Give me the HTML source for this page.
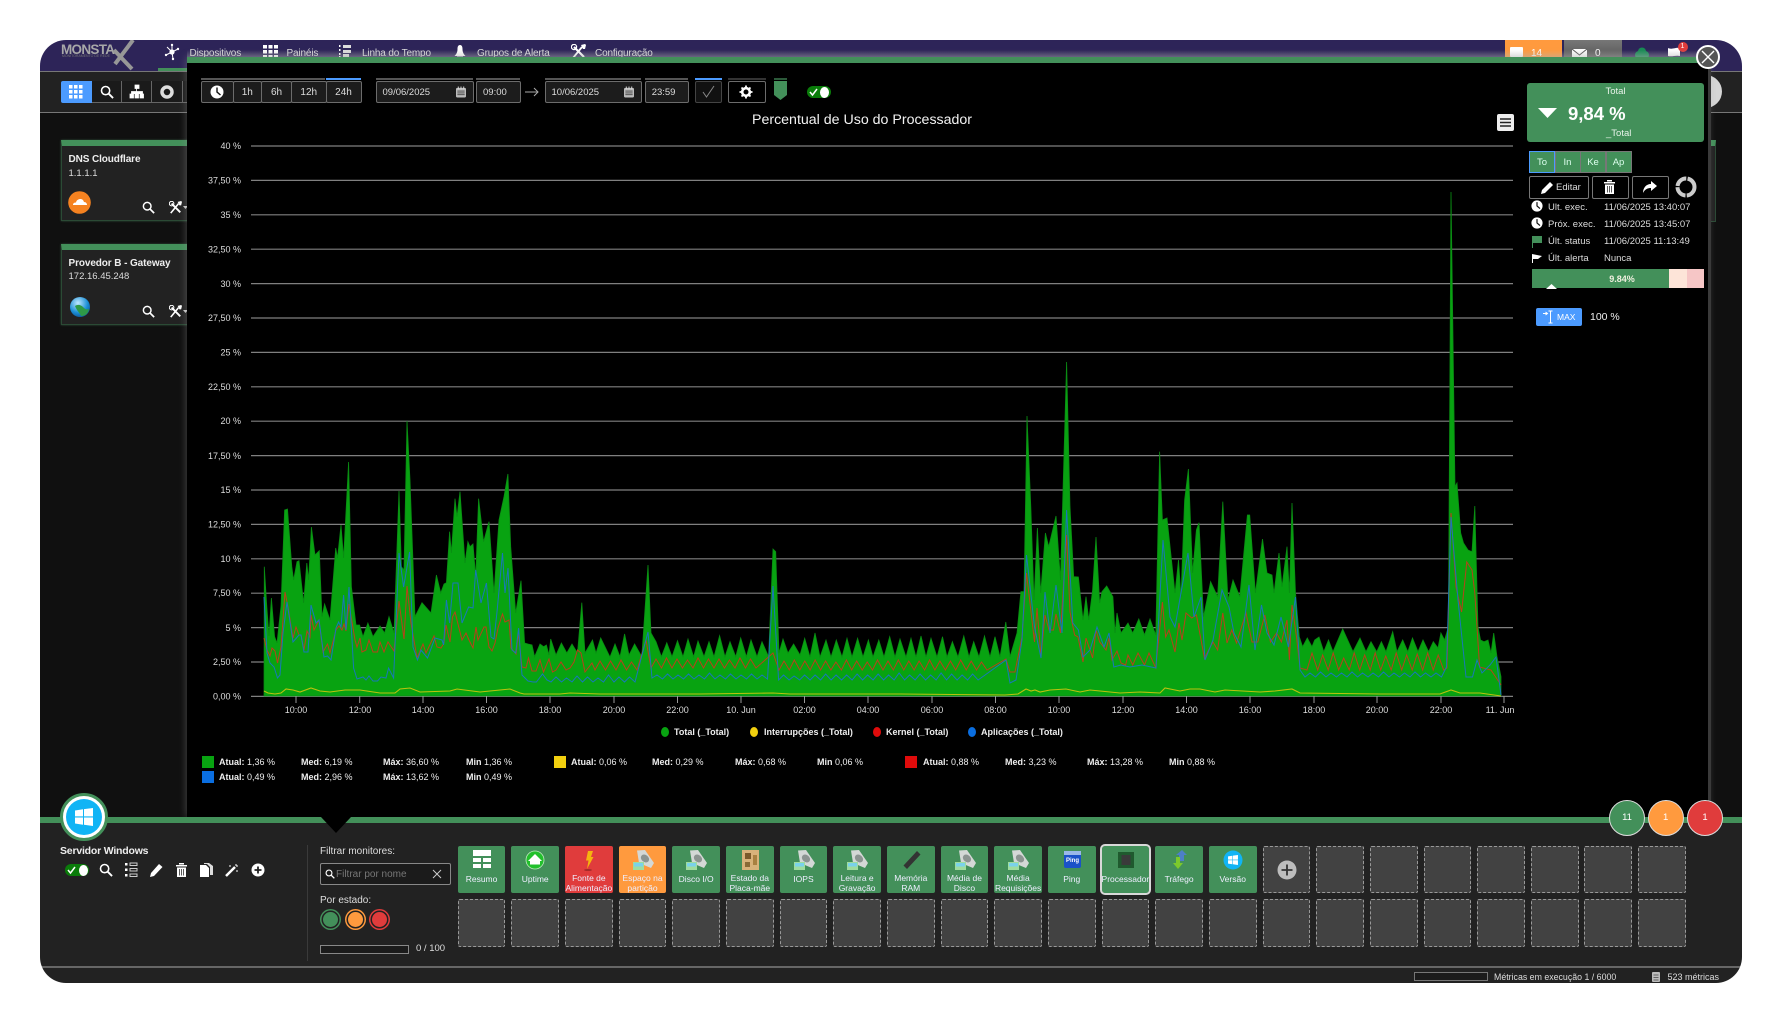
<!DOCTYPE html>
<html lang="pt"><head><meta charset="utf-8"><title>Monstax</title>
<style>
html,body{margin:0;padding:0;background:#fff;width:1782px;height:1023px;overflow:hidden}
body{font-family:"Liberation Sans",sans-serif;color:#eee;font-size:10px}
#w{position:absolute;left:0;top:0;width:1782px;height:1023px;clip-path:inset(40px 40px 40px 40px round 26px);background:#101010;overflow:hidden;filter:blur(.35px)}
.a{position:absolute;white-space:nowrap;line-height:12px}
.b{position:absolute}
svg.b{overflow:visible}
.nav{font-size:10px;letter-spacing:-.15px;color:#ddd;top:48px}
.st{font-size:9px;color:#eee}.st b{font-weight:bold}
.tb{position:absolute;top:81px;height:20px;border:1px solid #6c6c6c;background:#1c1c1c;border-radius:2px;color:#ddd;font-size:10px;line-height:22px;text-align:center;box-sizing:content-box}
.tl{position:absolute;top:78px;height:2px;background:#555}
.lbl{font-size:9px;font-weight:normal;fill:#ddd;font-family:"Liberation Sans",sans-serif}
.leg{font-size:9px;font-weight:bold;color:#eee;top:726px}
.dot{position:absolute;top:727px;width:8px;height:10px;border-radius:50%}
#tiles{position:absolute;left:457.7px;top:845.7px;display:grid;grid-template-columns:repeat(23,47.7px);grid-auto-rows:47.7px;column-gap:5.97px;row-gap:6px}
#tiles div{position:relative;background:#43905a;border-radius:2px;color:#eef;font-size:8.5px;line-height:10px;text-align:center;overflow:visible}
#tiles div span{position:absolute;left:-3px;right:-3px;top:28px}
#tiles div.two span{top:27px}
#tiles div svg{position:absolute;left:12px;top:3px}
#tiles i{display:block;background:#424242;border:1px dashed #999;border-radius:2px;box-sizing:border-box}
.row{font-size:9.5px;color:#ddd}
.rtab{position:absolute;top:151px;height:20px;width:24px;border:1px solid #777;background:#43905a;color:#dfe;text-align:center;line-height:22px;font-size:9.5px;box-sizing:content-box}
.rb{position:absolute;top:176px;height:21px;border:1px solid #777;border-radius:2px;background:#000;box-sizing:content-box}
.cb{position:absolute;top:800px;width:34px;height:34px;border-radius:50%;border:1px solid #ddd;color:#fff;text-align:center;line-height:34px;font-size:9.5px}
.sc{position:absolute;top:912px;width:15px;height:15px;border-radius:50%}
</style></head><body>
<svg width="0" height="0" style="position:absolute">
<defs>
<symbol id="sr" viewBox="0 0 15 15"><circle cx="6" cy="6" r="4.4" fill="none" stroke="#fff" stroke-width="1.7"/><path d="M9.3 9.3L14 14" stroke="#fff" stroke-width="2"/></symbol>
<symbol id="tl" viewBox="0 0 15 15"><path d="M2 14L11 3" stroke="#fff" stroke-width="1.800"/><path d="M3 3l10 10" stroke="#fff" stroke-width="2.200"/><circle cx="3" cy="3" r="2.600" fill="none" stroke="#fff" stroke-width="1.200"/><path d="M10 1l4-1 1 1-1 4-2 0z" fill="#fff"/></symbol>
<symbol id="ck" viewBox="0 0 14 14"><circle cx="7" cy="7" r="6.500" fill="#fff"/><path d="M7 2.500V7l3.500 3" stroke="#111" stroke-width="1.400" fill="none"/></symbol>
<symbol id="dk" viewBox="0 0 24 24"><path d="M6 1.500L14 1l9 13-3 5-12-5z" fill="#d4d8d6"/><ellipse cx="14" cy="9.500" rx="4.500" ry="3.500" transform="rotate(40 14 9.500)" fill="#8c9491"/><rect x="2" y="13" width="11" height="8" fill="#9fdc9f"/><rect x="3" y="14" width="9" height="3.500" fill="#7ad2ea"/></symbol>
<symbol id="win" viewBox="0 0 20 20"><path d="M1 3.500l8-1.200V9.400H1zM10 2.100L19 1v8.400h-9zM1 10.500h8v7.200l-8-1.200zM10 10.500h9V19l-9-1.200z" fill="#fff"/></symbol>
<symbol id="cal" viewBox="0 0 11 12"><rect y="1.500" width="11" height="10.500" rx="1.500" fill="#bbb"/><path d="M2.500 0v3M5.500 0v3M8.500 0v3" stroke="#ddd" stroke-width="1"/><path d="M1.500 5h8M1.500 7h8M1.500 9h8" stroke="#444" stroke-width="1"/></symbol>
</defs></svg>
<div id="w">
<!-- top bar -->
<div class="b" style="left:40px;top:40px;width:1702px;height:31px;background:#2d2458"></div>
<div class="b" style="left:40px;top:71px;width:1702px;height:42px;background:#222;border-top:1.5px solid #777;border-bottom:1.5px solid #777;box-sizing:border-box"></div>
<div class="a" style="left:61px;top:44px;font-size:13.500px;font-weight:bold;color:#a8a8a8;letter-spacing:-.7px">MONSTA</div>
<div class="a" style="left:62px;top:53px;font-size:3.500px;line-height:6px;color:#777">MONITORAMENTO DE REDE</div>
<svg class="b" style="left:112px;top:40px" width="22" height="30" viewBox="0 0 22 30"><path d="M2 10l18 19M21 0L3 24" stroke="#979797" stroke-width="4" fill="none"/></svg>
<svg class="b" style="left:164px;top:44px" width="16" height="16" viewBox="0 0 16 16"><circle cx="8" cy="8" r="2.600" fill="#fff"/><path d="M8 8L3 3M8 8l6-3M8 8l-6 3M8 8l1 7M8 8l0-7" stroke="#fff" stroke-width="1"/><circle cx="2" cy="11" r="1.200" fill="#fff"/><circle cx="14" cy="5" r="1.200" fill="#fff"/><circle cx="9" cy="15" r="1.200" fill="#fff"/><circle cx="8" cy="1" r="1.200" fill="#fff"/></svg>
<div class="a nav" style="left:189.500px">Dispositivos</div>
<svg class="b" style="left:263px;top:45px" width="15" height="14" viewBox="0 0 15 14"><path d="M0 0h4v3.500H0zM5.500 0h4v3.500h-4zM11 0h4v3.500h-4zM0 5h4v3.500H0zM5.500 5h4v3.500h-4zM11 5h4v3.500h-4zM0 10h4v3.500H0zM5.500 10h4v3.500h-4zM11 10h4v3.500h-4z" fill="#fff"/></svg>
<div class="a nav" style="left:286.500px">Painéis</div>
<svg class="b" style="left:339px;top:45px" width="12" height="13" viewBox="0 0 12 13"><path d="M0 0h1.500v2H0zM0 4h1.500v2H0zM0 8h1.500v2H0zM0 11h1.500v2H0z" fill="#fff"/><path d="M4 0h8v3H4zM4 5h8v3H4zM4 9h6v3H4z" fill="#ddd"/></svg>
<div class="a nav" style="left:362px">Linha do Tempo</div>
<svg class="b" style="left:454px;top:45px" width="12" height="13" viewBox="0 0 12 13"><path d="M6 0c2 0 2.500 2 2.500 4 0 3 1 5 3 7H.5c2-2 3-4 3-7C3.500 2 4 0 6 0z" fill="#fff"/><rect x="3" y="11.500" width="6" height="1.500" fill="#fff"/></svg>
<div class="a nav" style="left:477px">Grupos de Alerta</div>
<svg class="b" style="left:571px;top:44px" width="15" height="15"><use href="#tl"/></svg>
<div class="a nav" style="left:595px">Configuração</div>
<div class="b" style="left:158px;top:68px;width:30px;height:3px;background:#43905a"></div>
<!-- toolbar behind -->
<div class="b" style="left:60.700px;top:81px;width:31px;height:22px;background:#4c9bff;border-radius:2px 0 0 2px"></div>
<svg class="b" style="left:69px;top:85px" width="14" height="14" viewBox="0 0 14 14"><path d="M0 0h3.500v3.500H0zM5 0h3.500v3.500H5zM10 0h3.500v3.500H10zM0 5h3.500v3.500H0zM5 5h3.500v3.500H5zM10 5h3.500v3.500H10zM0 10h3.500v3.500H0zM5 10h3.500v3.500H5zM10 10h3.500v3.500H10z" fill="#fff"/></svg>
<div class="b" style="left:92px;top:81px;width:29px;height:21px;background:#1a1a1a;border-right:1px solid #666;border-bottom:1px solid #666"></div>
<div class="b" style="left:122px;top:81px;width:29px;height:21px;background:#1a1a1a;border-right:1px solid #666;border-bottom:1px solid #666"></div>
<div class="b" style="left:152px;top:81px;width:30px;height:21px;background:#1a1a1a;border-right:1px solid #666;border-bottom:1px solid #666"></div>
<div class="b" style="left:183px;top:81px;width:6px;height:21px;background:#1a1a1a;border-bottom:1px solid #666"></div>
<svg class="b" style="left:100px;top:85px" width="14" height="14"><use href="#sr"/></svg>
<svg class="b" style="left:130px;top:85px" width="14" height="14" viewBox="0 0 14 14"><path d="M5 0h4v3.500H5zM0 9h3.500v4H0zM5 9h3.500v4H5zM10 9h3.500v4H10zM6.500 3.500v3M1.500 9V6.500h11V9" fill="#fff" stroke="#fff" stroke-width=".8"/></svg>
<svg class="b" style="left:160px;top:85px" width="14" height="14" viewBox="0 0 14 14"><circle cx="7" cy="7" r="5" fill="none" stroke="#ddd" stroke-width="3.500"/></svg>
<!-- left cards -->
<div class="b" style="left:60.700px;top:139.500px;width:140px;height:81px;background:#222;border:1px solid #2b4a35;border-top:6px solid #43905a;box-sizing:border-box;box-shadow:0 0 2px #33533d"></div>
<div class="b" style="left:60.700px;top:244px;width:140px;height:81px;background:#222;border:1px solid #2b4a35;border-top:6px solid #43905a;box-sizing:border-box;box-shadow:0 0 2px #33533d"></div>
<div class="a" style="left:68.500px;top:153.500px;font-size:10px;font-weight:bold;color:#eee;letter-spacing:-.1px">DNS Cloudflare</div>
<div class="a" style="left:68.500px;top:168px;font-size:9.500px;color:#ddd">1.1.1.1</div>
<svg class="b" style="left:68px;top:191px" width="23" height="23" viewBox="0 0 23 23"><circle cx="11.500" cy="11.500" r="11.300" fill="#f58220"/><path d="M5 14c0-2 1.500-2.500 3-2.500C8.500 9 10.500 8 12.500 8c2 0 3 1.500 3.500 3 2 0 3 1.500 3 3z" fill="#fff"/></svg>
<svg class="b" style="left:142px;top:201px" width="13" height="13"><use href="#sr"/></svg>
<svg class="b" style="left:169px;top:201px" width="13" height="13"><use href="#tl"/></svg>
<svg class="b" style="left:183px;top:206px" width="5" height="3"><path d="M0 0h5L2.500 3z" fill="#ccc"/></svg>
<div class="a" style="left:68.500px;top:257.500px;font-size:10px;font-weight:bold;color:#eee;letter-spacing:-.1px">Provedor B - Gateway</div>
<div class="a" style="left:68.500px;top:271px;font-size:9.500px;color:#ddd">172.16.45.248</div>
<svg class="b" style="left:70px;top:297px" width="20" height="20" viewBox="0 0 20 20"><defs><radialGradient id="gl" cx=".4" cy=".3" r=".8"><stop offset="0" stop-color="#bfe8ff"/><stop offset=".6" stop-color="#1b8fd6"/><stop offset="1" stop-color="#0a4a8c"/></radialGradient></defs><circle cx="10" cy="10" r="10" fill="url(#gl)"/><path d="M5 9c3-2 6-1 8 1s3 3 6 2c-1 5-4 7-8 7-1-3-4-5-6-10z" fill="#2e9a47"/></svg>
<svg class="b" style="left:142px;top:305px" width="13" height="13"><use href="#sr"/></svg>
<svg class="b" style="left:169px;top:305px" width="13" height="13"><use href="#tl"/></svg>
<svg class="b" style="left:183px;top:310px" width="5" height="3"><path d="M0 0h5L2.500 3z" fill="#ccc"/></svg>
<!-- top right tabs -->
<div class="b" style="left:1505px;top:40px;width:57px;height:20px;background:#ff9a3e"></div>
<div class="b" style="left:1510px;top:47px;width:13px;height:10px;background:#fff;border-radius:1px"></div>
<div class="a" style="left:1531px;top:48px;color:#fff;font-size:10px">14</div>
<div class="b" style="left:1563.500px;top:40px;width:58.500px;height:20px;background:linear-gradient(#777,#555)"></div>
<svg class="b" style="left:1572px;top:49px" width="15" height="11" viewBox="0 0 15 11"><path d="M0 0h15v11H0z" fill="#fff"/><path d="M0 0l7.500 6L15 0" stroke="#555" fill="none"/></svg>
<div class="a" style="left:1595px;top:48px;color:#fff;font-size:10px">0</div>
<svg class="b" style="left:1634px;top:48px" width="16" height="11" viewBox="0 0 16 11"><circle cx="5" cy="7" r="4" fill="#188a55"/><circle cx="11" cy="7" r="4" fill="#188a55"/><circle cx="8" cy="3.500" r="4" fill="#188a55"/></svg>
<svg class="b" style="left:1668px;top:47px" width="12" height="11" viewBox="0 0 12 11"><path d="M0 1c4 2 8-1 12 0v8c-4-1-8 1-12 0z" fill="#fff"/></svg>
<div class="a" style="left:1677.500px;top:42px;width:10px;height:10px;border-radius:50%;background:#e03c3c;color:#fff;font-size:7px;line-height:10px;text-align:center">1</div>
<div class="b" style="left:1689px;top:75px;width:33px;height:33px;border-radius:50%;background:#d6d6d6"></div>
<div class="b" style="left:187px;top:50px;width:1521px;height:8px;background:linear-gradient(rgba(255,255,255,0),rgba(200,200,200,.35))"></div>
<!-- right col -->
<div class="b" style="left:1708px;top:140px;width:8px;height:82px;background:#222;border:1px solid #2b4a35;border-top:6px solid #43905a;box-sizing:border-box"></div>
<!-- modal -->
<div class="b" style="left:187px;top:57px;width:1521px;height:760px;background:#000;border-top:6px solid #43905a;box-sizing:border-box;box-shadow:0 0 8px rgba(150,150,150,.45)"></div>
<div class="b" style="left:1708px;top:63px;width:3px;height:754px;background:#3a3a3a"></div>
<!-- modal toolbar -->
<div class="tl" style="left:201px;width:124px"></div><div class="tl" style="left:325.500px;width:35px;background:#4c9bff"></div>
<div class="tb" style="left:201px;width:30.500px"></div>
<svg class="b" style="left:210px;top:85px" width="14" height="14"><use href="#ck"/></svg>
<div class="tb" style="left:232.500px;width:27.500px">1h</div>
<div class="tb" style="left:261px;width:29px">6h</div>
<div class="tb" style="left:291px;width:33.500px">12h</div>
<div class="tb" style="left:325.500px;width:34px">24h</div>
<div class="tl" style="left:376px;width:97px"></div>
<div class="tb" style="left:376px;width:95.500px;text-align:left;text-indent:5.500px;font-size:9.500px">09/06/2025</div>
<svg class="b" style="left:456px;top:86px" width="10" height="12"><use href="#cal"/></svg>
<div class="tl" style="left:476px;width:44px"></div>
<div class="tb" style="left:476px;width:43px;text-align:left;text-indent:6px;font-size:9.500px">09:00</div>
<svg class="b" style="left:525px;top:87px" width="14" height="10" viewBox="0 0 14 10"><path d="M0 5h13M9 1l4 4-4 4" fill="none" stroke="#aaa" stroke-width="1"/></svg>
<div class="tl" style="left:545px;width:96px"></div>
<div class="tb" style="left:545px;width:94.500px;text-align:left;text-indent:5.500px;font-size:9.500px">10/06/2025</div>
<svg class="b" style="left:624px;top:86px" width="10" height="12"><use href="#cal"/></svg>
<div class="tl" style="left:644.700px;width:43.500px"></div>
<div class="tb" style="left:644.700px;width:42px;text-align:left;text-indent:6px;font-size:9.500px">23:59</div>
<div class="tl" style="left:695px;width:27px;background:#4c9bff"></div>
<div class="tb" style="left:695px;width:25px;background:#111;border-color:#444"></div>
<svg class="b" style="left:702px;top:85px" width="13" height="13" viewBox="0 0 13 13"><path d="M1 7l3.500 5L12 1" fill="none" stroke="#888" stroke-width="1"/></svg>
<div class="tl" style="left:728px;width:38px;background:#333"></div>
<div class="tb" style="left:728px;width:36px;background:#000"></div>
<svg class="b" style="left:739px;top:85px" width="14" height="14" viewBox="0 0 14 14"><circle cx="7" cy="7" r="3.800" fill="none" stroke="#fff" stroke-width="2.600"/><path d="M7 .5v2.500M7 11v2.500M.5 7H3M11 7h2.500M2.500 2.500l2 2M9.500 9.500l2 2M11.500 2.500l-2 2M4.500 9.500l-2 2" stroke="#fff" stroke-width="1.800"/></svg>
<div class="b" style="left:774px;top:78px;width:13px;height:2px;background:#2c5a3a"></div>
<svg class="b" style="left:774px;top:81px" width="13" height="19" viewBox="0 0 13 19"><path d="M0 0h13v14l-6.500 5L0 14z" fill="#43905a"/></svg>
<div class="b" style="left:806.500px;top:86px;width:24px;height:12px;border-radius:6px;background:#0a7c0a"></div>
<div class="b" style="left:820px;top:86.500px;width:9px;height:11px;border-radius:50%;background:#fff"></div>
<svg class="b" style="left:809px;top:88px" width="9" height="8" viewBox="0 0 9 8"><path d="M1 4l2.500 3L8 1" stroke="#fff" stroke-width="1.500" fill="none"/></svg>
<div class="a" style="left:752px;top:113px;font-size:14.200px;color:#f2f2f2;line-height:15px">Percentual de Uso do Processador</div>
<div class="b" style="left:1497px;top:114px;width:17px;height:17px;background:#eee;border-radius:2px"></div>
<svg class="b" style="left:1497px;top:114px" width="17" height="17"><path d="M3 5h11M3 8.500h11M3 12h11" stroke="#222" stroke-width="1.600"/></svg>
<!-- chart -->
<svg class="b" style="left:0;top:0" width="1782" height="1023" viewBox="0 0 1782 1023">
<g stroke="#808080" stroke-width="1.200">
<path d="M251 146H1513M251 180.400H1513M251 214.800H1513M251 249.200H1513M251 283.600H1513M251 318H1513M251 352.400H1513M251 386.800H1513M251 421.200H1513M251 455.600H1513M251 490H1513M251 524.400H1513M251 558.800H1513M251 593.200H1513M251 627.600H1513M251 662H1513M251 696.400H1513"/>
</g>
<g class="lbl" text-anchor="end">
<text class="lbl" x="241" y="149">40 %</text><text class="lbl" x="241" y="183.500">37,50 %</text><text class="lbl" x="241" y="218">35 %</text><text class="lbl" x="241" y="252.500">32,50 %</text><text class="lbl" x="241" y="287">30 %</text><text class="lbl" x="241" y="321">27,50 %</text><text class="lbl" x="241" y="355.500">25 %</text><text class="lbl" x="241" y="390">22,50 %</text><text class="lbl" x="241" y="424">20 %</text><text class="lbl" x="241" y="459">17,50 %</text><text class="lbl" x="241" y="493">15 %</text><text class="lbl" x="241" y="527.500">12,50 %</text><text class="lbl" x="241" y="562">10 %</text><text class="lbl" x="241" y="596">7,50 %</text><text class="lbl" x="241" y="631">5 %</text><text class="lbl" x="241" y="665">2,50 %</text><text class="lbl" x="241" y="699.500">0,00 %</text>
</g>
<path fill="#08a311" stroke="#0a8d13" stroke-width=".8" d="M264 696 264.300 566.700 266.800 606.700 269 636 271.400 598 274.600 636.700 277 643 281 606 284.600 510 287.500 509 291.800 566.700 293.600 580 297 561.700 299 560.700 303.600 603 306.800 563 308.600 580 311.400 527 315 555 319.300 550.700 322 616.700 324.600 604 330 620 335.700 548 337.500 558 341 525 343.600 558 348.600 462 351.400 586.700 356 625 359.600 625 363 636.700 367.900 623 373 636.700 380 626 384.600 633 389 616.700 394 633 399 491 401.400 566.700 404 570 407 421 410 480 415 616.700 422 602.700 431 613 436.400 575 440.700 593 444 584 446.400 582.700 449.600 531.700 451.400 553 455 498.700 457 516.700 460 491.700 465 563 467.900 541.700 470 546.700 473 544 475.700 576.700 478.600 498.700 483.600 541.700 489 521.700 494 593 499 520 504 496.700 507.900 474 510.700 546.700 515.700 613 521 580.700 524.600 643 528 644 532 645 534.600 656.700 540 644 543.600 646.700 546.400 645 549 655 550.700 639 556 655 561.400 643 566.800 653 572 644 577.500 653 581.800 602.700 585 653 592.500 640 596 653 600.700 638 610 657 615 644 620 656.700 624.600 634 629 655 634.600 644 641.800 656.700 648 565 651 633 656 641.700 661.400 656.700 666.800 642.700 672 656.700 677.500 640.700 683 656.700 688 639 693.600 656.700 698 641 704 656.700 709 641.700 714 656.700 719.600 635.700 725 656.700 730 641.700 735.700 656.700 740.700 638 746.400 656.700 751 640 757 656.700 762 641.700 768.600 656.700 773 549 775.700 551.700 779 653 783 639 788 653 793.600 644 800 655 804.700 638.300 810 657 815 633 820 657 826 640 831 657 836.300 640 842 657 847 638.300 852 657 857.600 638.300 863 657 868.400 640 873 657 878.800 640 884 657 889.700 636.700 895 657 900 639 906 657 911 638.300 916 657 921 636 926 657 931 638.300 937 657 942.500 636.700 947 657 952.400 641.700 958 657 963.800 636 969 657 973.700 641.700 979 657 984.500 636 990 657 995 636.700 1000 657 1005.800 622 1010 656.700 1017 633 1020.900 591.700 1024 591.700 1027 416 1030.800 506.700 1034 600 1037.400 528 1040.700 593 1045.400 533 1048.700 546.700 1056 516 1060.500 580 1066.600 362 1070 506.700 1073.700 576.700 1078.400 577 1083 620 1086 596.700 1088.800 620 1092.600 590 1096 537 1099.700 603 1102 591.700 1106.700 586 1112.900 596.700 1115 633 1117 613 1121 633 1128 623 1132.700 633 1138.800 619 1144.500 635 1150 619 1155.800 635 1159.600 451.700 1162.400 520 1167 518 1175 593 1178.500 560 1181 596.700 1184.600 500 1188.400 469 1192.600 573 1196.400 530 1199 522.700 1203.500 616.700 1210.600 581.700 1217.600 596.700 1222.800 501.700 1228 600 1233 580 1239.800 596.700 1247.400 515 1249.700 515 1255.400 593 1262.500 539 1267 573 1272 575 1274 593 1279 553 1282 586.700 1287 546.700 1289.400 593 1292 503 1295.500 593 1299.300 636.700 1302.600 646.700 1307.300 638 1312 646.700 1314.700 640 1319 637 1323.800 651.700 1328.500 640 1333 651.700 1342.700 629 1353 651.700 1360 638 1366 651.700 1371 641.700 1376.700 651.700 1381.400 641.700 1386 651.700 1392.700 631.700 1397 651.700 1402.700 640 1407.800 651.700 1412.500 638 1418 651.700 1423 640 1428.600 651.700 1433.300 641.700 1438 648 1440.900 633 1444.600 640 1448.400 626.700 1451 192 1455 486.700 1457 483 1460.700 533 1463.500 543 1468 550 1472 551.700 1474.800 506 1478 626.700 1480.500 640 1484 641.700 1488 640 1491 653 1493.700 633 1497 656.700 1501 676.700 1501 696Z"/>
<path fill="none" stroke="#b8411a" stroke-width="1" d="M264 638 267 650 270 656 272 648 275 651 277.500 663 281 647 285 592 288 607 293 638 296 627 299 635 301 635 304 650 307 631 310 637 311 615 314 630 319 620 323 652 327.500 644 330 653 336 630 339 626 342 630 344 624 346 631 349 604 355 640 357 647 360 638 362 652 366 650 369 640 373 652 377.500 652 380 642 384 652 388 642 394 651 399 601 404 639 407 586 411 623 417 658 423 644 426 653 434 636 437 647 441 648 444 643 446 625 450 642 452.500 617 455 612 462 640 466 633 469 640 473 648 476 627 478 640 484 627 486 627 489 647 492 651 495 643 498 628 502.500 614 505 622 509 620 511 648 516 654 518.500 633 522 667 526 668 528.500 658 532 671 536 671 540 660 543.500 672 549 659 552.500 672 556 670 561 662 566 670 570 668 574 662 577.500 650 581 653 585 672 592 663 595 670 l5 -9 5.500 9 5 -9 5.500 9 5 -10 5.500 10 5 -8 5.500 8 L646 640 651 668 l5 -9 5.500 9 5 -10 5.500 10 5 -9 5.500 9 5 -8 5.500 8 5 -10 5.500 10 5 -9 5.500 9 5 -9 5.500 9 5 -8 5.500 8 5 -10 5.500 10 5 -9 5.500 9 L773 653 779 670 l5 -9 5.300 9 5 -10 5.500 10 5 -9 5.300 9 5 -10 5.500 10 5 -9 5.300 9 5 -8 5.500 8 5 -10 5.300 10 5 -9 5.500 9 5 -8 5.300 8 5 -10 5.500 10 5 -9 5.300 9 5 -10 5.500 10 5 -9 5.300 9 5 -9 5.500 9 5 -10 5.300 10 5 -9 5.500 9 5 -9 5.300 9 5 -10 5.500 10 5 -9 5.300 9 5 -8 5.500 8 L1006 659 1010 672 1015 672 1022 637 1026.500 573 1034.500 642 1037 608 1041 657 1045 615 1049 630 1053.500 630 1056 614 1060.500 633 1066.600 535 1070 612 1074.600 635 1078 637 1083 662 1086 638 1092.600 658 1096 630 1099.700 642 1106 650 1109 638 1112 660 1117 651 1121 663 1125.600 665 1128 655 1132.700 665 1138 653 1144.500 665 1149 653 1155.800 668 1162.400 602 1165.700 637 1169 630 1175 652 1179 623 1182 640 1186 613 1191.700 618 1196.400 615 1204.400 658 1213 642 1217.600 650 1222.800 613 1227 643 1231.800 630 1236.500 643 1246 613 1252 642 1257.800 642 1264.800 615 1270.500 642 1276.600 633 1281.400 642 1287 620 1289.400 660 1292 605 1296.500 637 1300 668 1307 670 l5 -17 5.700 17 5 -15 5.500 15 5 -17 5.500 17 5 -12 5.500 12 5 -17 5.500 17 5 -15 5.500 15 5 -17 5.500 17 5 -14 5.500 14 5 -17 5.500 17 5 -15 5.500 15 5 -16 5.500 16 5 -17 5.500 17 5 -15 5.500 15 L1447 668 1451 513 1456 587 1461.600 612 1466.800 562 1472 570 1474.800 593 1479.600 667 1491 670 1501 685"/>
<path fill="none" stroke="#1878b8" stroke-width="1" d="M264 597 267 653 270 663 274 667 277.500 678 280 675 283 633 287 602 293 642 299 635 301 635 304 652 308 652 311 605 316 623 319 620 324 657 327.500 656 331 660 336 628 338.600 622 341 627 343.600 595 346 630 349 587 353.600 668 357 679 363 677 366 680 369 676 373 681 377.500 681 381 677 386 678 388.600 668 393.600 678 399 553 403.600 587 409.600 552 413 647 417.500 660 421 650 427.500 658 435 638 442 640 443.600 645 446.400 600 449.600 623 453 583 458 583 462 623 468.600 607 473 608 475.700 570 481 603 486.400 583 491 637 494 639 497 612 502.500 553 505 593 508 568 512 650 515.700 653 518.600 628 522 675 528 681 533 682 536.400 682 542.500 674 547 680 551 682 l5 -5 5.500 5 5 -4 5.500 4 5 -6 5.500 6 5 -5 5.500 5 5 -4 5.500 4 5 -7 5.500 7 5 -5 5.500 5 5 -5 5.500 5 L648 632 652 678 l5 -3 5.500 4 5 -5 5.500 5 5 -4 5.500 4 5 -5 5.500 5 5 -4 5.500 4 5 -6 5.500 6 5 -4 5.500 4 5 -5 5.500 5 5 -4 5.500 4 5 -5 5.500 5 5 -4 5.500 4 L773 586 778.600 680 l5 -5 5.500 5 5 -4 5.500 4 5 -5 5.500 5 5 -5 5.500 5 5 -6 5.500 6 5 -5 5.500 5 5 -5 5.500 5 5 -6 5.500 6 5 -5 5.500 5 5 -6 5.500 6 5 -5 5.500 5 5 -7 5.500 7 5 -5 5.500 5 5 -6 5.500 6 5 -5 5.500 5 5 -7 5.500 7 5 -6 5.500 6 5 -5 5.500 5 5 -6 5.500 6 L1006 660 1010 683 1016 680 1022 640 1026.500 555 1034.500 627 1041 658 1045 592 1050 633 1056 585 1062 633 1066.600 510 1072.800 623 1078.400 630 1083 657 1090 650 1097 627 1104 647 1109 633 1113.800 667 1121 665 1130 667 1142 665 1156 668 1163 540 1170 617 1175 627 1188 553 1194 617 1201 597 1205 660 1213 640 1222 590 1229 607 1234 633 1241 647 1249 585 1255 650 1261.500 605 1267 633 1274 645 1281 617 1288.400 647 1295.500 597 1300 670 1305 677 l5 -4 5.500 4 5 -5 5.500 5 5 -4 5.500 4 5 -4 5.500 4 5 -5 5.500 5 5 -4 5.500 4 5 -4 5.500 4 5 -5 5.500 5 5 -4 5.500 4 5 -4 5.500 4 5 -5 5.500 5 5 -4 5.500 4 5 -4 5.500 4 L1446.500 667 1451 517 1458 600 1466 677 1472.500 677 1477 660 1482 673 1490 665 1496 657 1501 695"/>
<path fill="none" stroke="#bcc20f" stroke-width="1.100" d="M264 691 268 693 275 694 281 693 286 689 293 690 300 692 311 688 320 691 330 692 345 690 360 690 380 693 395 693 400 689 410 688 420 692 450 691 457 689 480 692 500 690 510 689 520 693 524 694 560 694 570 693 600 694 650 694 700 694 773 693 790 694 900 694 1005 695 1018 694 1026 689 1031 691 1035 690 1040 692 1050 690 1066 689 1080 692 1090 690 1100 691 1120 693 1140 692 1160 693 1165 688 1180 691 1190 689 1200 689 1215 692 1225 690 1260 692 1275 691 1292 689 1300 693 1380 694 1440 694 1451 690 1460 693 1480 693 1501 696"/>
<path stroke="#999" stroke-width="1" d="M296 696v7M359.700 696v7M423 696v7M486.500 696v7M550 696v7M614 696v7M677.500 696v7M741 696v7M804.500 696v7M868 696v7M932 696v7M995.500 696v7M1059 696v7M1123 696v7M1186.500 696v7M1250 696v7M1314 696v7M1377 696v7M1441 696v7M1504 696v7"/>
<g class="lbl" text-anchor="middle">
<text class="lbl" x="296" y="713">10:00</text><text class="lbl" x="360" y="713">12:00</text><text class="lbl" x="423" y="713">14:00</text><text class="lbl" x="486.500" y="713">16:00</text><text class="lbl" x="550" y="713">18:00</text><text class="lbl" x="614" y="713">20:00</text><text class="lbl" x="677.500" y="713">22:00</text><text class="lbl" x="741" y="713">10. Jun</text><text class="lbl" x="804.500" y="713">02:00</text><text class="lbl" x="868" y="713">04:00</text><text class="lbl" x="932" y="713">06:00</text><text class="lbl" x="995.500" y="713">08:00</text><text class="lbl" x="1059" y="713">10:00</text><text class="lbl" x="1123" y="713">12:00</text><text class="lbl" x="1186.500" y="713">14:00</text><text class="lbl" x="1250" y="713">16:00</text><text class="lbl" x="1314" y="713">18:00</text><text class="lbl" x="1377" y="713">20:00</text><text class="lbl" x="1441" y="713">22:00</text><text class="lbl" x="1500" y="713">11. Jun</text>
</g>
</svg>
<!-- legend -->
<div class="dot" style="left:660.500px;background:#08a311"></div><div class="a leg" style="left:674px">Total (_Total)</div>
<div class="dot" style="left:750px;background:#f2d00f"></div><div class="a leg" style="left:764px">Interrupções (_Total)</div>
<div class="dot" style="left:872.500px;background:#e00b0b"></div><div class="a leg" style="left:886px">Kernel (_Total)</div>
<div class="dot" style="left:968px;background:#0a6ee0"></div><div class="a leg" style="left:981px">Aplicações (_Total)</div>
<!-- stats -->
<div class="b" style="left:202px;top:756px;width:12px;height:12px;background:#08a311"></div>
<div class="b" style="left:202px;top:771px;width:12px;height:12px;background:#0a6ee0"></div>
<div class="b" style="left:554px;top:756px;width:12px;height:12px;background:#f2d00f"></div>
<div class="b" style="left:905px;top:756px;width:12px;height:12px;background:#e00b0b"></div>
<div class="a st" style="left:219px;top:756px"><b>Atual:</b> 1,36 %</div><div class="a st" style="left:301px;top:756px"><b>Med:</b> 6,19 %</div><div class="a st" style="left:383px;top:756px"><b>Máx:</b> 36,60 %</div><div class="a st" style="left:466px;top:756px"><b>Min</b> 1,36 %</div>
<div class="a st" style="left:571px;top:756px"><b>Atual:</b> 0,06 %</div><div class="a st" style="left:652px;top:756px"><b>Med:</b> 0,29 %</div><div class="a st" style="left:735px;top:756px"><b>Máx:</b> 0,68 %</div><div class="a st" style="left:817px;top:756px"><b>Min</b> 0,06 %</div>
<div class="a st" style="left:923px;top:756px"><b>Atual:</b> 0,88 %</div><div class="a st" style="left:1005px;top:756px"><b>Med:</b> 3,23 %</div><div class="a st" style="left:1087px;top:756px"><b>Máx:</b> 13,28 %</div><div class="a st" style="left:1169px;top:756px"><b>Min</b> 0,88 %</div>
<div class="a st" style="left:219px;top:771px"><b>Atual:</b> 0,49 %</div><div class="a st" style="left:301px;top:771px"><b>Med:</b> 2,96 %</div><div class="a st" style="left:383px;top:771px"><b>Máx:</b> 13,62 %</div><div class="a st" style="left:466px;top:771px"><b>Min</b> 0,49 %</div>
<!-- right panel -->
<div class="b" style="left:1527px;top:83px;width:177px;height:59px;background:#43905a;border-radius:3px"></div>
<div class="a" style="left:1527px;width:177px;text-align:center;top:86px;font-size:9.500px;color:#e8f3ea">Total</div>
<svg class="b" style="left:1538px;top:108px" width="19" height="10"><path d="M0 0h19L9.500 10z" fill="#fff"/></svg>
<div class="a" style="left:1568px;top:104px;font-size:18.500px;font-weight:bold;color:#fff;line-height:19px">9,84 %</div>
<div class="a" style="left:1606px;top:128px;font-size:9.500px;color:#e8f3ea">_Total</div>
<div class="rtab" style="left:1529px;border-color:#4c9bff;width:24px">To</div>
<div class="rtab" style="left:1554.500px">In</div>
<div class="rtab" style="left:1580px">Ke</div>
<div class="rtab" style="left:1605.500px">Ap</div>
<div class="rb" style="left:1529px;width:58px"></div>
<svg class="b" style="left:1541px;top:181px" width="13" height="13" viewBox="0 0 13 13"><path d="M0 13l1-4L9 1l3 3-8 8z" fill="#fff"/></svg>
<div class="a" style="left:1556px;top:182px;font-size:9.500px;color:#ddd">Editar</div>
<div class="rb" style="left:1591.700px;width:35px"></div>
<svg class="b" style="left:1604px;top:180px" width="11" height="14" viewBox="0 0 11 14"><path d="M0 2h11v1.500H0zM3 0h5v1.500H3zM1 4.500h9V14H1z" fill="#fff"/><path d="M3.500 6v6.500M5.500 6v6.500M7.500 6v6.500" stroke="#333" stroke-width=".8"/></svg>
<div class="rb" style="left:1631.700px;width:35px"></div>
<svg class="b" style="left:1643px;top:181px" width="14" height="12" viewBox="0 0 14 12"><path d="M8 0l6 5-6 5V7C5 7 2 8 0 12 0 7 3 3 8 3z" fill="#fff"/></svg>
<svg class="b" style="left:1675px;top:176px" width="22" height="22" viewBox="0 0 22 22"><circle cx="11" cy="11" r="8.500" fill="none" stroke="#ccc" stroke-width="4" stroke-dasharray="12.500 1.300"/></svg>
<svg class="b" style="left:1531px;top:200px" width="12" height="12"><use href="#ck"/></svg>
<svg class="b" style="left:1531px;top:217px" width="12" height="12"><use href="#ck"/></svg>
<svg class="b" style="left:1532px;top:236px" width="10" height="12" viewBox="0 0 10 12"><path d="M0 0h10v7H1v5H0z" fill="#43905a"/></svg>
<svg class="b" style="left:1532px;top:254px" width="10" height="9" viewBox="0 0 10 9"><path d="M0 0l10 2-4 3H1v4H0z" fill="#fff"/></svg>
<div class="a row" style="left:1548px;top:202px">Ult. exec.</div><div class="a row" style="left:1604px;top:202px">11/06/2025 13:40:07</div>
<div class="a row" style="left:1548px;top:219px">Próx. exec.</div><div class="a row" style="left:1604px;top:219px">11/06/2025 13:45:07</div>
<div class="a row" style="left:1548px;top:236px">Últ. status</div><div class="a row" style="left:1604px;top:236px">11/06/2025 11:13:49</div>
<div class="a row" style="left:1548px;top:253px">Últ. alerta</div><div class="a row" style="left:1604px;top:253px">Nunca</div>
<div class="b" style="left:1532.300px;top:269px;width:137px;height:19px;background:#43905a"></div>
<div class="b" style="left:1669.300px;top:269px;width:17.400px;height:19px;background:#fde4d8"></div>
<div class="b" style="left:1686.700px;top:269px;width:17.300px;height:19px;background:#f6c6c6"></div>
<div class="a" style="left:1532px;width:180px;text-align:center;top:272.500px;font-size:9px;font-weight:bold;color:#f0f0e0">9.84%</div>
<svg class="b" style="left:1545.500px;top:284px" width="11" height="5"><path d="M0 5L5.500 0 11 5z" fill="#fff"/></svg>
<div class="b" style="left:1536px;top:308px;width:46px;height:18px;background:#4c9bff;border-radius:2px"></div>
<svg class="b" style="left:1543px;top:311px" width="10" height="12" viewBox="0 0 10 12"><path d="M7.500 0v12M5.500 0h4M5.500 12h4M0 2.500h4M2.500 1l2 1.500-2 1.500" stroke="#fff" fill="none"/></svg>
<div class="a" style="left:1557px;top:311px;font-size:8.500px;color:#fff">MAX</div>
<div class="a" style="left:1590px;top:311px;font-size:10.500px;color:#eee">100 %</div>
<!-- close -->
<div class="b" style="left:1696px;top:45px;width:24px;height:24px;border-radius:50%;background:#555;border:2px solid #fff;box-sizing:border-box"></div>
<svg class="b" style="left:1696px;top:45px" width="24" height="24"><path d="M6 6l12 12M18 6L6 18" stroke="#fff" stroke-width="1.400"/></svg>
<!-- bottom panel -->
<div class="b" style="left:40px;top:817px;width:1702px;height:166px;background:#222"></div>
<div class="b" style="left:40px;top:817px;width:1702px;height:6px;background:#43905a"></div>
<svg class="b" style="left:318px;top:817px" width="36" height="17"><path d="M3 0h30L18 16z" fill="#000"/></svg>
<div class="b" style="left:40px;top:965.500px;width:1702px;height:2px;background:#666"></div>
<div class="b" style="left:60px;top:793px;width:48px;height:48px;border-radius:50%;background:#fff;border:3px solid #43905a;box-sizing:border-box"></div>
<div class="b" style="left:66px;top:799px;width:36px;height:36px;border-radius:50%;background:#11b4f5"></div>
<svg class="b" style="left:74px;top:807px" width="20" height="20"><use href="#win"/></svg>
<div class="cb" style="left:1609px;background:#43905a;top:800px">11</div>
<div class="cb" style="left:1647.600px;background:#ff9a3e">1</div>
<div class="cb" style="left:1687px;background:#e03c3c">1</div>
<div class="a" style="left:60px;top:845px;font-size:10.500px;font-weight:bold;color:#eee;letter-spacing:-.2px">Servidor Windows</div>
<div class="b" style="left:64.700px;top:864px;width:24px;height:12px;border-radius:6px;background:#0a7c0a"></div>
<div class="b" style="left:78.500px;top:864.500px;width:9px;height:11px;border-radius:50%;background:#fff"></div>
<svg class="b" style="left:67px;top:866px" width="9" height="8" viewBox="0 0 9 8"><path d="M1 4l2.500 3L8 1" stroke="#fff" stroke-width="1.500" fill="none"/></svg>
<svg class="b" style="left:99px;top:863px" width="14" height="14"><use href="#sr"/></svg>
<svg class="b" style="left:125px;top:863px" width="12" height="14" viewBox="0 0 12 14"><path d="M0 0h2.500v2.500H0zM0 5.500h2.500V8H0zM0 11h2.500v2.500H0z" fill="#fff"/><path d="M5 0h7v2.500H5zM5 5.500h7V8H5zM5 11h7v2.500H5z" fill="none" stroke="#ccc" stroke-width="1"/></svg>
<svg class="b" style="left:150px;top:863px" width="13" height="14" viewBox="0 0 13 14"><path d="M0 14l1-4L9 1l3.500 3L4 13z" fill="#fff"/></svg>
<svg class="b" style="left:176px;top:863px" width="11" height="14" viewBox="0 0 11 14"><path d="M0 2h11v1.500H0zM3 0h5v1.500H3zM1 4.500h9V14H1z" fill="#fff"/><path d="M3.500 6v6.500M5.500 6v6.500M7.500 6v6.500" stroke="#333" stroke-width=".8"/></svg>
<svg class="b" style="left:200px;top:863px" width="13" height="14" viewBox="0 0 13 14"><path d="M0 2h6l3 3v9H0z" fill="#fff"/><path d="M4 0h5l4 3v9h-3V4L7 1H4z" fill="#ddd"/></svg>
<svg class="b" style="left:225px;top:863px" width="14" height="14" viewBox="0 0 14 14"><path d="M1 13L10 4" stroke="#fff" stroke-width="2.500"/><path d="M11 1v2M13 3h-2M5 2v2M12 7v2" stroke="#fff" stroke-width="1"/></svg>
<svg class="b" style="left:251px;top:863px" width="14" height="14" viewBox="0 0 14 14"><circle cx="7" cy="7" r="6.500" fill="#fff"/><path d="M7 3.500v7M3.500 7h7" stroke="#222" stroke-width="1.800"/></svg>
<div class="b" style="left:307px;top:845px;width:1px;height:116px;background:#3a3a3a"></div>
<div class="a" style="left:320px;top:846px;font-size:10px;color:#ddd">Filtrar monitores:</div>
<div class="b" style="left:320px;top:863px;width:131px;height:22px;background:#1b1b1b;border:1.500px solid #888;box-sizing:border-box;border-radius:2px"></div>
<svg class="b" style="left:325px;top:869px" width="10" height="10"><use href="#sr"/></svg>
<div class="a" style="left:336px;top:869px;font-size:10px;color:#777">Filtrar por nome</div>
<svg class="b" style="left:432px;top:869px" width="10" height="10"><path d="M1 1l8 8M9 1L1 9" stroke="#ccc" stroke-width="1"/></svg>
<div class="a" style="left:320px;top:895px;font-size:10px;color:#ddd">Por estado:</div>
<div class="sc" style="left:323px;background:#43905a;box-shadow:0 0 0 1.500px #222,0 0 0 3px #43905a"></div>
<div class="sc" style="left:347.600px;background:#ff9a3e;box-shadow:0 0 0 1.500px #222,0 0 0 3px #ff9a3e"></div>
<div class="sc" style="left:372px;background:#e03c3c;box-shadow:0 0 0 1.500px #222,0 0 0 3px #e03c3c"></div>
<div class="b" style="left:320px;top:945px;width:89px;height:9px;background:#1b1b1b;border:1px solid #888;box-sizing:border-box"></div>
<div class="a" style="left:416px;top:943px;font-size:9.500px;color:#ddd">0 / 100</div>
<!-- tiles -->
<div id="tiles">
<div><svg width="24" height="24" viewBox="0 0 24 24"><path d="M3 1h18v6H3zM3 9h8v4H3zM13 9h8v4h-8zM3 15h8v4H3zM13 15h8v4h-8z" fill="#fff"/></svg><span>Resumo</span></div>
<div><svg width="24" height="24" viewBox="0 0 24 24"><circle cx="12" cy="11" r="9" fill="#22c02c" stroke="#bfe8c0" stroke-width=".8"/><path d="M5 12h14l-7-7z" fill="#fff"/><rect x="7" y="12" width="10" height="3.500" fill="#fff"/></svg><span>Uptime</span></div>
<div class="two" style="background:#e03c3c"><svg width="24" height="24" viewBox="0 0 24 24"><path d="M11 2h5l-2 6h2.500L10 20l1.500-8.500H9z" fill="#f5b40f"/><ellipse cx="11" cy="21" rx="4" ry="1" fill="#a52a2a"/></svg><span>Fonte de<br>Alimentação</span></div>
<div class="two" style="background:#ff9a3e"><svg width="24" height="24"><use href="#dk"/></svg><span>Espaço na<br>partição</span></div>
<div><svg width="24" height="24"><use href="#dk"/></svg><span>Disco I/O</span></div>
<div class="two"><svg width="24" height="24" viewBox="0 0 24 24"><rect x="4" y="1" width="17" height="20" fill="#d8b27a"/><rect x="7" y="4" width="6" height="6" fill="#7a5a2a"/><rect x="15" y="6" width="4" height="10" fill="#a88040"/><rect x="7" y="13" width="5" height="5" fill="#8a6a36"/></svg><span>Estado da<br>Placa-mãe</span></div>
<div><svg width="24" height="24"><use href="#dk"/></svg><span>IOPS</span></div>
<div class="two"><svg width="24" height="24"><use href="#dk"/></svg><span>Leitura e<br>Gravação</span></div>
<div class="two"><svg width="24" height="24" viewBox="0 0 24 24"><path d="M18 2l3.500 3.500L8 20l-3.500-3.500z" fill="#333"/></svg><span>Memória<br>RAM</span></div>
<div class="two"><svg width="24" height="24"><use href="#dk"/></svg><span>Média de<br>Disco</span></div>
<div class="two"><svg width="24" height="24"><use href="#dk"/></svg><span>Média<br>Requisições</span></div>
<div><svg width="24" height="24" viewBox="0 0 24 24"><rect x="4" y="2" width="17" height="17" rx="2" fill="#1a52c8"/><rect x="4" y="2" width="17" height="4" fill="#9ab8e8"/><text x="12.500" y="13" font-size="6" fill="#fff" text-anchor="middle" font-family="Liberation Sans" font-weight="bold">Ping</text></svg><span>Ping</span></div>
<div style="outline:2px solid #d8d8d8;outline-offset:0;border-radius:3px"><svg width="24" height="24" viewBox="0 0 24 24"><rect x="4" y="3" width="16" height="16" fill="#1f5a2e"/><rect x="7.500" y="6" width="9" height="10" fill="#3a3a3a"/></svg><span>Processador</span></div>
<div><svg width="24" height="24" viewBox="0 0 24 24"><path d="M15 1l5 5h-3v6h-5V6H9z" fill="#4d7fc8"/><path d="M9 8v6H6l5 6 5-6h-3V8z" fill="#7cc92c"/></svg><span>Tráfego</span></div>
<div><svg width="24" height="24" viewBox="0 0 24 24"><circle cx="12" cy="11" r="9.500" fill="#11b4f5"/><g transform="translate(6.500 5.500) scale(.55)"><use href="#win" width="20" height="20"/></g></svg><span>Versão</span></div>
<i style="position:relative"><svg style="position:absolute;left:13px;top:13px" width="20" height="20" viewBox="0 0 20 20"><circle cx="10" cy="10" r="9.500" fill="#bdbdbd"/><path d="M10 4.500v11M4.500 10h11" stroke="#333" stroke-width="1.800"/></svg></i>
<i></i><i></i><i></i><i></i><i></i><i></i><i></i>
<i></i><i></i><i></i><i></i><i></i><i></i><i></i><i></i><i></i><i></i><i></i><i></i><i></i><i></i><i></i><i></i><i></i><i></i><i></i><i></i><i></i><i></i><i></i>
</div>
<!-- status -->
<div class="b" style="left:1414.300px;top:971.500px;width:74px;height:9px;background:#1b1b1b;border:1px solid #777;box-sizing:border-box"></div>
<div class="a" style="left:1494px;top:971px;font-size:8.800px;color:#ddd">Métricas em execução 1 / 6000</div>
<svg class="b" style="left:1652px;top:972px" width="8" height="10"><rect width="8" height="10" rx="1" fill="#bbb"/><path d="M1.500 3h5M1.500 5.500h5M1.500 8h5" stroke="#444" stroke-width=".7"/></svg>
<div class="a" style="left:1667.500px;top:971px;font-size:9px;color:#ddd">523 métricas</div>
</div>
</body></html>
